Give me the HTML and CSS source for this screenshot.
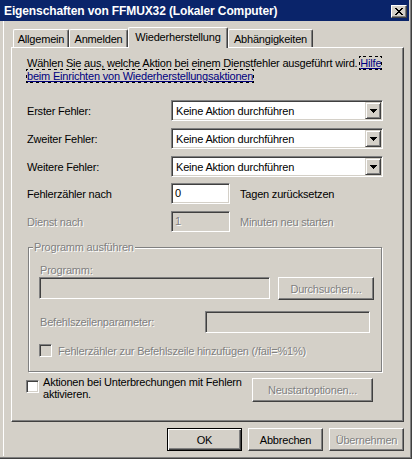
FILE: index.html
```html
<!DOCTYPE html>
<html>
<head>
<meta charset="utf-8">
<title>Eigenschaften von FFMUX32 (Lokaler Computer)</title>
<link rel="stylesheet" href="styles.css">
</head>
<body>
<div class="window">
	<div class="titlebar">
		<span class="title">Eigenschaften von FFMUX32 (Lokaler Computer)</span>
		<span class="closeBtn">
			<svg width="8" height="7" viewBox="0 0 8 7" shape-rendering="crispEdges"><path fill="#000" d="M0 0h2v1H0zM6 0h2v1H6zM1 1h2v1H1zM5 1h2v1H5zM2 2h4v1H2zM3 3h2v1H3zM2 4h4v1H2zM1 5h2v1H1zM5 5h2v1H5zM0 6h2v1H0zM6 6h2v1H6z"/></svg>
		</span>
	</div>
	<div class="client">
		<!-- tabs -->
		<div class="tabs">
			<div class="tab w1">Allgemein</div>
			<div class="tab w2">Anmelden</div>
			<div class="tab selected">Wiederherstellung</div>
			<div class="tab w4">Abhängigkeiten</div>
		</div>
		<div class="panel">
			<div class="desc">Wählen Sie aus, welche Aktion bei einem Dienstfehler ausgeführt wird. <span class="link">Hilfe<br>beim Einrichten von Wiederherstellungsaktionen</span></div>

			<div class="row r1">
				<span class="label">Erster Fehler:</span>
				<div class="combo"><span class="comboText">Keine Aktion durchführen</span><span class="dropBtn"><svg width="7" height="4" viewBox="0 0 7 4" shape-rendering="crispEdges"><path fill="#000" d="M0 0h7v1H0zM1 1h5v1H1zM2 2h3v1H2zM3 3h1v1H3z"/></svg></span></div>
			</div>
			<div class="row r2">
				<span class="label">Zweiter Fehler:</span>
				<div class="combo"><span class="comboText">Keine Aktion durchführen</span><span class="dropBtn"><svg width="7" height="4" viewBox="0 0 7 4" shape-rendering="crispEdges"><path fill="#000" d="M0 0h7v1H0zM1 1h5v1H1zM2 2h3v1H2zM3 3h1v1H3z"/></svg></span></div>
			</div>
			<div class="row r2">
				<span class="label">Weitere Fehler:</span>
				<div class="combo"><span class="comboText">Keine Aktion durchführen</span><span class="dropBtn"><svg width="7" height="4" viewBox="0 0 7 4" shape-rendering="crispEdges"><path fill="#000" d="M0 0h7v1H0zM1 1h5v1H1zM2 2h3v1H2zM3 3h1v1H3z"/></svg></span></div>
			</div>
			<div class="row r3">
				<span class="label">Fehlerzähler nach</span>
				<div class="edit small">0</div>
				<span class="after">Tagen zurücksetzen</span>
			</div>
			<div class="row r4">
				<span class="label dis">Dienst nach</span>
				<div class="edit small off"><span class="dis">1</span></div>
				<span class="after dis">Minuten neu starten</span>
			</div>

			<div class="group">
				<span class="legend dis">Programm ausführen</span>
				<div class="gLabel dis">Programm:</div>
				<div class="progRow">
					<div class="edit prog off"></div>
					<div class="btn browse"><span class="dis">Durchsuchen...</span></div>
				</div>
				<div class="row cmdRow">
					<span class="cmdLabel dis">Befehlszeilenparameter:</span>
					<div class="edit cmd off"></div>
				</div>
				<div class="row chkRow">
					<span class="check off"></span>
					<span class="chkText dis">Fehlerzähler zur Befehlszeile hinzufügen (/fail=%1%)</span>
				</div>
			</div>

			<div class="actRow">
				<span class="check act"></span>
				<span class="actText">Aktionen bei Unterbrechungen mit Fehlern aktivieren.</span>
				<div class="btn restart"><span class="dis">Neustartoptionen...</span></div>
			</div>
		</div>

		<div class="buttons">
			<div class="btn default">OK</div>
			<div class="btn">Abbrechen</div>
			<div class="btn"><span class="dis">Übernehmen</span></div>
		</div>
	</div>
</div>
</body>
</html>
```

FILE: styles.css
```css
body{
	margin:0;
	background:#fff;
	font-family:"Liberation Sans", Arial, sans-serif;
	font-size:11px;
	letter-spacing:-0.2px;
	color:#000;
}
.window{
	width:412px;
	height:459px;
	box-sizing:border-box;
	background:#d4d0c8;
	border-right:1px solid #404040;
	border-bottom:1px solid #404040;
	box-shadow:inset -1px -1px #808080;
	padding:0 2px 2px 0;
	display:flex;
	flex-direction:column;
}
.titlebar{
	height:21px;
	background:#0a246a;
	color:#fff;
	display:flex;
	align-items:center;
	justify-content:space-between;
	padding-left:4px;
}
.title{
	font-weight:bold;
	font-size:12px;
	letter-spacing:-0.12px;
}
.closeBtn{
	width:16px;
	height:13px;
	margin:2px 2px 0 0;
	box-sizing:border-box;
	background:#d4d0c8;
	border:1px solid;
	border-color:#fff #404040 #404040 #fff;
	box-shadow:inset -1px -1px #808080;
	display:flex;
	align-items:center;
	justify-content:center;
}
.client{
	flex:1;
	margin-left:3px;
	border-left:1px solid #fff;
	display:flex;
	flex-direction:column;
}

/* tabs */
.tabs{
	display:flex;
	align-items:flex-end;
	height:20px;
	margin:6px 0 0 9px;
}
.tab{
	height:18px;
	box-sizing:border-box;
	border-top:1px solid #fff;
	border-left:1px solid #fff;
	border-right:1px solid #404040;
	border-radius:2px 2px 0 0;
	box-shadow:inset -1px 0 #808080;
	text-align:center;
	padding-top:3px;
	white-space:nowrap;
}
.w1{ width:56px; }
.w2{ width:59px; }
.w4{ width:85px; }
.tab.selected{
	width:100px;
	height:21px;
	margin-bottom:-1px;
	position:relative;
	z-index:1;
	background:#d4d0c8;
	padding-top:3px;
}
.panel{
	margin-left:7px;
	width:393px;
	height:375px;
	box-sizing:border-box;
	border:1px solid;
	border-color:#fff #404040 #404040 #fff;
	box-shadow:inset -1px -1px #808080;
	padding:9px 0 0 15px;
}
.desc{
	width:368px;
	line-height:13px;
	white-space:nowrap;
}
.link{
	color:#000080;
	text-decoration:underline;
	outline:1px dotted #000;
}

/* rows */
.row{
	display:flex;
	align-items:center;
}
.label{ width:144px; }
.r1{ margin-top:17px; }
.r2{ margin-top:7px; }
.r3{ margin-top:6px; }
.r4{ margin-top:7px; }
.after{ margin-left:10px; }

.dis{
	color:#808080;
	text-shadow:1px 1px #fff;
}

.combo{
	width:212px;
	height:21px;
	box-sizing:border-box;
	border:1px solid;
	border-color:#808080 #fff #fff #808080;
	box-shadow:inset 1px 1px #404040, inset -1px -1px #d4d0c8;
	background:#fff;
	display:flex;
	align-items:center;
	padding:1px 1px 1px 4px;
}
.comboText{ flex:1; }
.dropBtn{
	width:16px;
	height:17px;
	box-sizing:border-box;
	border:1px solid;
	border-color:#d4d0c8 #404040 #404040 #d4d0c8;
	box-shadow:inset 1px 1px #fff, inset -1px -1px #808080;
	background:#d4d0c8;
	display:flex;
	align-items:center;
	justify-content:center;
}

.edit{
	height:21px;
	box-sizing:border-box;
	border:1px solid;
	border-color:#808080 #fff #fff #808080;
	box-shadow:inset 1px 1px #404040, inset -1px -1px #d4d0c8;
	background:#fff;
	padding:0 3px;
	line-height:19px;
}
.edit.off{ background:#d4d0c8; }
.small{ width:59px; }

/* group box */
.group{
	position:relative;
	margin:15px 0 0 1px;
	width:354px;
	height:125px;
	box-sizing:border-box;
	border:1px solid #808080;
	box-shadow:inset 1px 1px #fff, 1px 1px #fff;
	padding:16px 0 0 10px;
}
.legend{
	position:absolute;
	top:-7px;
	left:4px;
	padding:0 1px;
	background:#d4d0c8;
	line-height:13px;
}
.gLabel{
	padding-left:1px;
	line-height:13px;
}
.progRow{
	display:flex;
	align-items:flex-start;
	gap:8px;
}
.prog{
	width:231px;
	height:22px;
}
.cmdRow{ margin-top:11px; }
.cmdLabel{
	width:165px;
	padding-left:1px;
}
.cmd{
	width:165px;
	height:22px;
}
.chkRow{ margin-top:11px; }
.chkText{ margin-left:6px; }

.check{
	width:13px;
	height:13px;
	box-sizing:border-box;
	border:1px solid;
	border-color:#808080 #fff #fff #808080;
	box-shadow:inset 1px 1px #404040, inset -1px -1px #d4d0c8;
	background:#fff;
	flex:none;
}
.check.off{ background:#d4d0c8; }

.actRow{
	display:flex;
	align-items:flex-start;
	margin-top:4px;
}
.check.act{
	margin:4px 0 0 -1px;
}
.actText{
	width:209px;
	margin-left:4px;
	line-height:12px;
}
.restart{
	width:121px;
	height:24px;
	margin-top:2px;
}

/* buttons */
.btn{
	width:75px;
	height:23px;
	box-sizing:border-box;
	border:1px solid;
	border-color:#fff #404040 #404040 #fff;
	box-shadow:inset -1px -1px #808080, inset 1px 1px #d4d0c8;
	background:#d4d0c8;
	display:flex;
	align-items:center;
	justify-content:center;
	white-space:nowrap;
}
.btn.browse{ width:96px; }
.btn.restart{ width:121px; height:24px; }
.btn.default{
	border-color:#000;
	box-shadow:inset 1px 1px #fff, inset -1px -1px #404040, inset -2px -2px #808080;
}
.buttons{
	display:flex;
	justify-content:flex-end;
	gap:6px;
	margin-top:6px;
	padding-right:5px;
}
```
